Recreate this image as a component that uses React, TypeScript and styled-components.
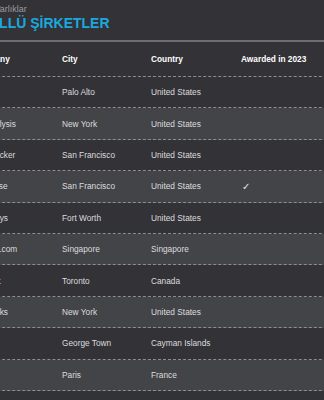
import React from "react";
import styled, { createGlobalStyle } from "styled-components";

const Global = createGlobalStyle`
  html, body { margin: 0; padding: 0; overflow: hidden; background: #333236; }
  body { font-family: "Liberation Sans", Arial, sans-serif; }
`;

const Page = styled.div`
  width: 380px;
  margin-left: -28px;
  background: #333236;
  min-height: 400px;
`;

const Heading = styled.div`
  padding: 3px 0 0 0;
  height: 38px;
  box-sizing: border-box;
`;

const Sub = styled.div`
  font-size: 9px;
  color: #9c9ca0;
  line-height: 12px;
  margin-left: 2px;
`;

const Title = styled.div`
  font-size: 14px;
  font-weight: bold;
  color: #1ba8df;
  line-height: 17px;
  margin-left: -4px;
`;

const Rule = styled.div`
  height: 2px;
  background: #6e6e71;
  margin-top: 2px;
`;

const Row = styled.div<{ $alt?: boolean; $head?: boolean }>`
  display: grid;
  grid-template-columns: 90px 89px 90px 111px;
  align-items: center;
  height: ${(p) => (p.$head ? "34px" : "30.4px")};
  border-bottom: 1px dashed #8e8e92;
  background: ${(p) => (p.$alt ? "#434448" : "#333236")};
  font-size: 8.3px;
  color: ${(p) => (p.$head ? "#ffffff" : "#dcdcdf")};
  font-weight: ${(p) => (p.$head ? "bold" : "normal")};
`;

const Cell = styled.div`
  white-space: nowrap;
  overflow: hidden;
`;

const Check = styled.span`
  font-size: 10px;
  color: #e6e6ea;
  margin-left: 1px;
`;

const rows = [
  ["Tesla", "Palo Alto", "United States", false],
  ["Go Analysis", "New York", "United States", false],
  ["Job Tracker", "San Francisco", "United States", false],
  ["Database", "San Francisco", "United States", true],
  ["Powersys", "Fort Worth", "United States", false],
  ["Lazada.com", "Singapore", "Singapore", false],
  ["Top Hat", "Toronto", "Canada", false],
  ["Boxworks", "New York", "United States", false],
  ["XP Inc", "George Town", "Cayman Islands", false],
  ["Criteo", "Paris", "France", false],
] as const;

const App: React.FC = () => (
  <>
    <Global />
    <Page>
      <Heading>
        <Sub>Tüm Varlıklar</Sub>
        <Title>ÖDÜLLÜ ŞİRKETLER</Title>
      </Heading>
      <Rule />
      <Row $head>
        <Cell>Company</Cell>
        <Cell>City</Cell>
        <Cell>Country</Cell>
        <Cell>Awarded in 2023</Cell>
      </Row>
      {rows.map(([name, city, country, award], i) => (
        <Row key={i} $alt={i % 2 === 1}>
          <Cell>{name}</Cell>
          <Cell>{city}</Cell>
          <Cell>{country}</Cell>
          <Cell>{award ? <Check>✓</Check> : null}</Cell>
        </Row>
      ))}
    </Page>
  </>
);

export default App;
